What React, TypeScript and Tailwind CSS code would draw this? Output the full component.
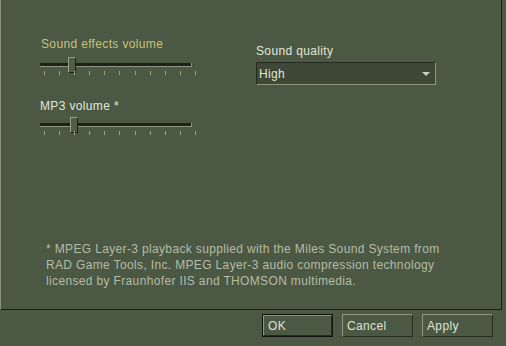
import React from "react";

const TICKS = Array.from({ length: 11 });

function Slider({ thumb, className }: { thumb: number; className?: string }) {
  return (
    <div className={"relative h-[18px] w-[156px] " + (className ?? "")}>
      <div className="absolute left-0 top-[6px] h-[4px] w-[152px] border-r border-b border-[#8c9680] bg-[#1d2219]" />
      <div
        className="absolute top-0 h-[16px] w-[8px] border-t border-l border-[#98a28a] border-r border-b border-r-[#1d2219] border-b-[#1d2219] bg-[#4f5c47]"
        style={{ left: thumb }}
      />
      <div className="absolute left-[4px] top-[14px] flex w-[152px] justify-between">
        {TICKS.map((_, i) => (
          <div key={i} className="h-[4px] w-px bg-[#98a28a]" />
        ))}
      </div>
    </div>
  );
}

function Button({ label, primary }: { label: string; primary?: boolean }) {
  return (
    <div className={"h-[23px] w-[71px] " + (primary ? "border border-[#10140c]" : "")}>
      <div className="flex h-full w-full items-center border-t border-l border-[#8d977f] border-r border-b border-r-[#262c20] border-b-[#262c20] pl-[4px] leading-none text-[#dfe3d2]">
        {label}
      </div>
    </div>
  );
}

export default function App() {
  return (
    <div className="h-[346px] w-[506px] bg-[#4b5844] text-[12px] leading-[16px] tracking-[0.35px] font-['Liberation_Sans',Arial,sans-serif]">
      <div className="flex h-[310px] w-[502px] flex-col border-l border-[#8a947c] border-r border-b border-r-[#1a1f16] border-b-[#1a1f16]">
        <div className="flex">
          <div className="w-[255px] pl-[39px] pt-[36px]">
            <div className="pl-px text-[#c9c27c]">Sound effects volume</div>
            <Slider thumb={28} className="mt-[5px]" />
            <div className="mt-[23px] text-[#e2e6d6]">MP3 volume *</div>
            <Slider thumb={30} className="mt-[3px]" />
          </div>
          <div className="pt-[43px]">
            <div className="text-[#e2e6d6]">Sound quality</div>
            <div className="mt-[3px] flex h-[23px] w-[180px] items-center justify-between border-t border-l border-[#262c20] border-r border-b border-r-[#8c9680] border-b-[#8c9680] bg-[#3e4837] pl-[2px] pr-[5px] text-[#e2e6d6]">
              <span>High</span>
              <svg width="8" height="4" viewBox="0 0 8 4">
                <polygon points="0,0 8,0 4,4" fill="#c9cdbd" />
              </svg>
            </div>
          </div>
        </div>
        <div className="mt-auto mb-[20px] pl-[45px] text-[#b4bca4]">
          <div>* MPEG Layer-3 playback supplied with the Miles Sound System from</div>
          <div>RAD Game Tools, Inc. MPEG Layer-3 audio compression technology</div>
          <div>licensed by Fraunhofer IIS and THOMSON multimedia.</div>
        </div>
      </div>
      <div className="flex justify-end gap-[9px] pr-[13px] pt-[4px]">
        <Button label="OK" primary />
        <Button label="Cancel" />
        <Button label="Apply" />
      </div>
    </div>
  );
}
